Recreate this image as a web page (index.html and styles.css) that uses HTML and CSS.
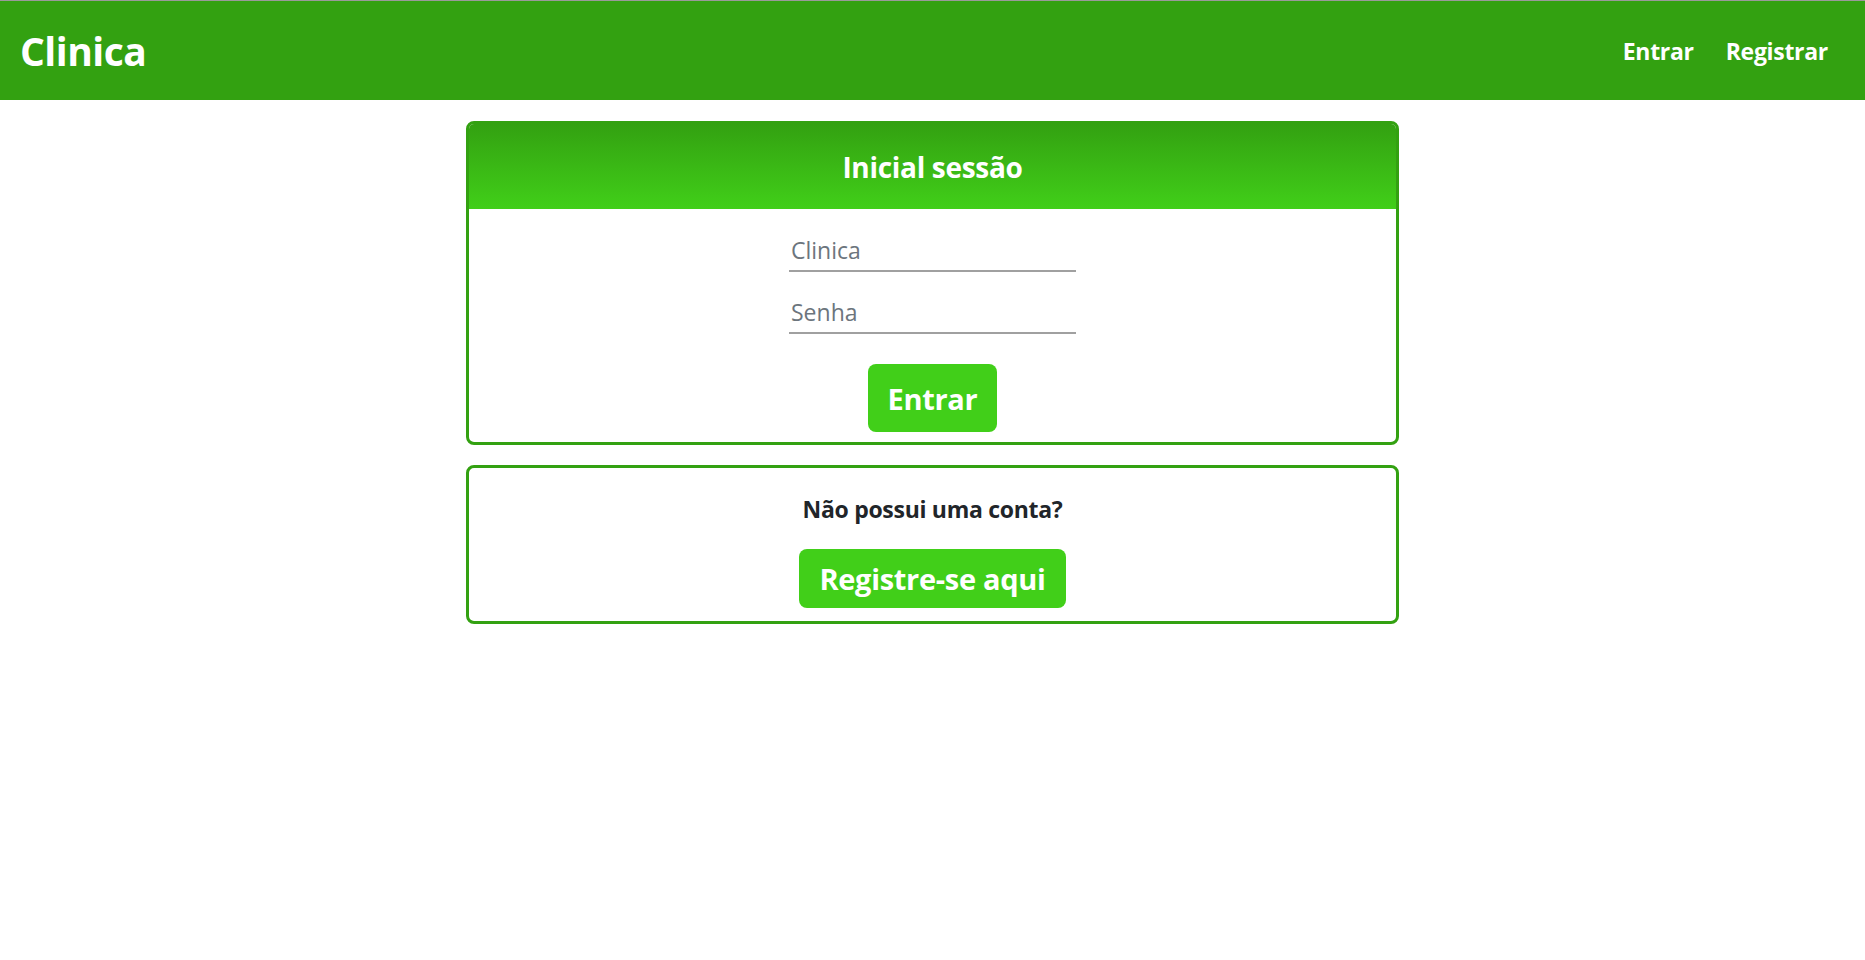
FILE: index.html
```html
<!DOCTYPE html>
<html lang="pt">
<head>
<meta charset="utf-8">
<title>Clinica</title>
<link rel="stylesheet" href="styles.css">
</head>
<body>
<header class="navbar">
  <a class="brand" href="#">Clinica</a>
  <nav class="nav">
    <a href="#" class="nav-link">Entrar</a>
    <a href="#" class="nav-link">Registrar</a>
  </nav>
</header>
<main class="main">
  <section class="card">
    <div class="card-header">Inicial sessão</div>
    <form class="card-body login-form">
      <input class="field" type="text" placeholder="Clinica">
      <input class="field" type="password" placeholder="Senha">
      <button class="btn btn-login" type="button">Entrar</button>
    </form>
  </section>
  <section class="card card-register">
    <p class="question">Não possui uma conta?</p>
    <a href="#" class="btn btn-register">Registre-se aqui</a>
  </section>
</main>
</body>
</html>
```

FILE: styles.css
```css
* { box-sizing: border-box; }
html, body { margin: 0; padding: 0; background: #fff; }
body {
  font-family: "Open Sans", "Noto Sans", "Liberation Sans", sans-serif;
  color: #212529;
}
.navbar {
  height: 100px;
  border-top: 1px solid #9a9a9a;
  background: #33a111;
  display: flex;
  align-items: center;
  justify-content: space-between;
  padding: 0 37px 0 20px;
}
.brand {
  color: #fff;
  text-decoration: none;
  font-weight: 700;
  font-size: 39px;
  letter-spacing: -0.5px;
}
.nav { display: flex; gap: 32px; }
.nav-link {
  color: #fff;
  text-decoration: none;
  font-weight: 700;
  font-size: 23px;
  letter-spacing: -0.3px;
}
.main { padding-top: 21px; }
.card {
  width: 50%;
  margin: 0 auto 20px;
  border: 3px solid #33a111;
  border-radius: 8px;
  overflow: hidden;
  background: #fff;
}
.card-header {
  height: 85px;
  background: linear-gradient(#33a111, #41cf19);
  color: #fff;
  font-weight: 700;
  font-size: 28px;
  letter-spacing: -0.3px;
  display: flex;
  align-items: center;
  justify-content: center;
}
.login-form {
  display: flex;
  flex-direction: column;
  align-items: center;
  padding: 21px 0 10px;
}
.field {
  width: 287px;
  height: 42px;
  border: 0;
  border-bottom: 2px solid #a0a0a0;
  padding: 0 2px;
  font-family: inherit;
  font-size: 23px;
  color: #212529;
  outline: none;
  background: transparent;
}
.field + .field { margin-top: 20px; }
.field::placeholder { color: #6c757d; }
.btn {
  display: inline-flex;
  align-items: center;
  justify-content: center;
  background: #41cf19;
  color: #fff;
  border: 0;
  border-radius: 8px;
  font-family: inherit;
  font-weight: 700;
  font-size: 29px;
  letter-spacing: -0.3px;
  text-decoration: none;
  cursor: pointer;
}
.btn-login {
  margin-top: 30px;
  width: 129px;
  height: 68px;
}
.card-register {
  display: flex;
  flex-direction: column;
  align-items: center;
  padding: 25px 0 13px;
}
.question {
  margin: 0;
  font-weight: 700;
  font-size: 23px;
  letter-spacing: -0.3px;
}
.btn-register {
  margin-top: 24px;
  width: 267px;
  height: 59px;
}
```
